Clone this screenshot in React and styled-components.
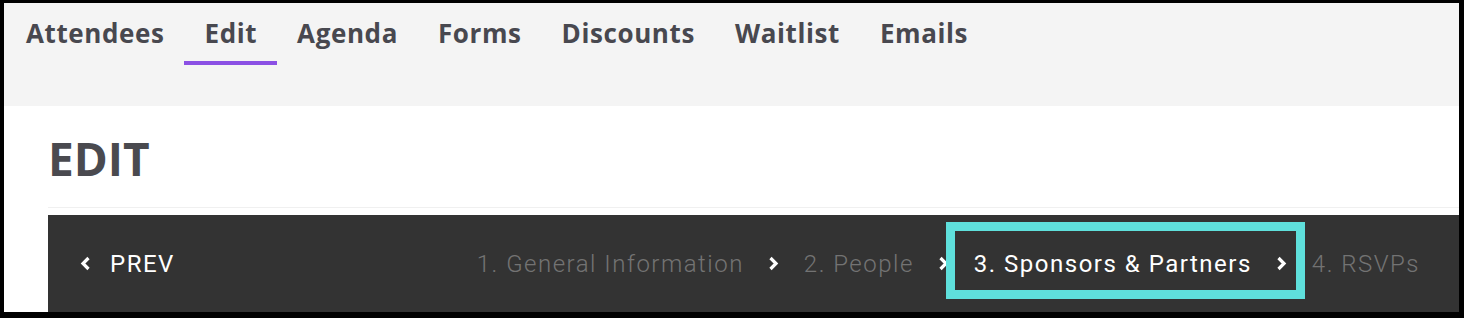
import styled, { createGlobalStyle } from "styled-components";

const GlobalStyle = createGlobalStyle`
  html, body {
    margin: 0;
    padding: 0;
    background: #fff;
  }
  * {
    box-sizing: border-box;
  }
`;

const Frame = styled.div`
  width: 1464px;
  height: 318px;
  border-style: solid;
  border-color: #000;
  border-width: 3px 5px 6px 4px;
  overflow: hidden;
  background: #fff;
  font-family: "Open Sans", "Liberation Sans", sans-serif;
`;

const TabBar = styled.nav`
  height: 103px;
  background: #f4f4f4;
  display: flex;
  align-items: flex-start;
  padding-left: 2px;
`;

const Tab = styled.a`
  padding: 15px 20px 13px;
  line-height: 30px;
  font-size: 26px;
  font-weight: 700;
  letter-spacing: 0.6px;
  color: #48484f;
  border-bottom: 4px solid ${(p) => (p.$active ? "#8b50e4" : "transparent")};
  cursor: pointer;
`;

const Content = styled.section`
  padding-left: 44px;
`;

const Title = styled.h1`
  margin: 0;
  height: 102px;
  padding-top: 24px;
  font-size: 46px;
  line-height: 56px;
  font-weight: 700;
  color: #4a4a4f;
  border-bottom: 1px solid #f0f0f0;
`;

const StepBar = styled.div`
  margin-top: 7px;
  height: 97px;
  background: #333333;
  display: flex;
  align-items: center;
  justify-content: space-between;
  padding: 0 39px 0 32px;
  font-family: "Roboto", "Liberation Sans", sans-serif;
  font-size: 24px;
  line-height: 30px;
  letter-spacing: 1.5px;
`;

const Prev = styled.a`
  display: flex;
  align-items: center;
  gap: 19px;
  color: #fff;
`;

const Steps = styled.ol`
  margin: 0;
  padding: 0;
  list-style: none;
  display: flex;
  align-items: center;
  gap: 25px;
`;

const Step = styled.li`
  position: relative;
  display: flex;
  align-items: center;
  gap: 24px;
  font-weight: ${(p) => (p.$current ? 400 : 300)};
  color: ${(p) => (p.$current ? "#ffffff" : "#737373")};

  ${(p) =>
    p.$current &&
    `
    &::after {
      content: "";
      position: absolute;
      left: -28px;
      right: -18px;
      top: -27px;
      bottom: -20px;
      border: 9px solid #5fe0dc;
    }
  `}
`;

const Chevron = ({ left }) => (
  <svg width="11" height="15" viewBox="0 0 11 15">
    <path
      d={left ? "M8.5 2 L3 7.5 L8.5 13" : "M2.5 2 L8 7.5 L2.5 13"}
      fill="none"
      stroke="#fff"
      strokeWidth="3.2"
    />
  </svg>
);

const steps = [
  "1. General Information",
  "2. People",
  "3. Sponsors & Partners",
  "4. RSVPs",
];

const tabs = ["Attendees", "Edit", "Agenda", "Forms", "Discounts", "Waitlist", "Emails"];

export default function App() {
  return (
    <>
      <GlobalStyle />
      <Frame>
        <TabBar>
          {tabs.map((t) => (
            <Tab key={t} $active={t === "Edit"}>
              {t}
            </Tab>
          ))}
        </TabBar>
        <Content>
          <Title>EDIT</Title>
          <StepBar>
            <Prev>
              <Chevron left />
              PREV
            </Prev>
            <Steps>
              {steps.map((s, i) => (
                <Step key={s} $current={i === 2}>
                  {s}
                  {i < steps.length - 1 && <Chevron />}
                </Step>
              ))}
            </Steps>
          </StepBar>
        </Content>
      </Frame>
    </>
  );
}
